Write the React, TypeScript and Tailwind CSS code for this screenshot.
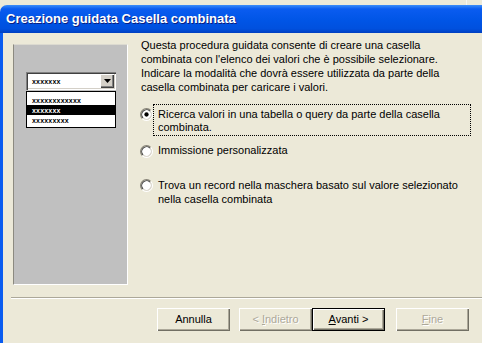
import React from "react";

const font = "font-['Liberation_Sans','Arial',sans-serif]";

function Radio({ checked }: { checked?: boolean }) {
  return (
    <svg width="13" height="13" viewBox="0 0 12 12" className="shrink-0">
      <circle cx="6" cy="6" r="4.5" fill="#fff" />
      <path d="M2.11 9.89A5.5 5.5 0 0 1 9.89 2.11" fill="none" stroke="#8a877a" strokeWidth="1" />
      <path d="M2.82 9.18A4.5 4.5 0 0 1 9.18 2.82" fill="none" stroke="#404040" strokeWidth="1" />
      <path d="M9.89 2.11A5.5 5.5 0 0 1 2.11 9.89" fill="none" stroke="#ffffff" strokeWidth="1" />
      <path d="M9.18 2.82A4.5 4.5 0 0 1 2.82 9.18" fill="none" stroke="#d4d0c8" strokeWidth="1" />
      {checked && <circle cx="6" cy="6" r="2" fill="#000" />}
    </svg>
  );
}

function WizButton({
  label,
  accessKey,
  disabled,
  isDefault,
}: {
  label: string;
  accessKey?: string;
  disabled?: boolean;
  isDefault?: boolean;
}) {
  const idx = accessKey ? label.indexOf(accessKey) : -1;
  return (
    <div
      className={
        "flex h-[23px] w-[73px] items-center justify-center bg-[#ECE9D8] text-[11px] " +
        (isDefault
          ? "border border-black shadow-[inset_1px_1px_0_#fff,inset_-1px_-1px_0_#716f64,inset_-2px_-2px_0_#aca899]"
          : "shadow-[inset_1px_1px_0_#fff,inset_-1px_-1px_0_#716f64,inset_-2px_-2px_0_#aca899]") +
        (disabled ? " text-[#aca899] [text-shadow:1px_1px_0_#fff]" : " text-black")
      }
    >
      {idx < 0 ? (
        <span>{label}</span>
      ) : (
        <span>
          {label.slice(0, idx)}
          <span className="underline underline-offset-[1px]">{accessKey}</span>
          {label.slice(idx + 1)}
        </span>
      )}
    </div>
  );
}

function ListRow({ text, selected }: { text: string; selected?: boolean }) {
  return (
    <div
      className={
        "flex h-[10px] items-center pl-[5px] text-[7px] font-bold leading-none tracking-[0.2px] " +
        (selected ? "bg-black text-white" : "text-black")
      }
    >
      {text}
    </div>
  );
}

export default function App() {
  return (
    <div className={"flex h-[343px] w-[482px] flex-col overflow-hidden bg-[#ECE9D8] " + font}>
      {/* strip above the window */}
      <div className="flex h-[5px] shrink-0">
        <div className="w-[466px]" />
        <div className="w-px bg-[#f7f6f0]" />
      </div>

      {/* Title bar */}
      <div className="flex h-[28px] shrink-0 items-center rounded-tl-[7px] bg-[linear-gradient(to_bottom,#3b8df8_0%,#0a5cf0_14%,#0055e6_55%,#0050de_85%,#003fc0_100%)] pl-[6px]">
        <span className="text-[13px] font-bold text-white [text-shadow:1px_1px_0_#0a1e80]">
          Creazione guidata Casella combinata
        </span>
      </div>

      <div className="flex min-h-0 flex-1">
        {/* window frame */}
        <div className="w-[3px] shrink-0 bg-[#0a5cf0]" />

        <div className="flex flex-1 flex-col text-[11px] text-black">
          <div className="flex items-start pl-[10px] pt-[5px]">
            {/* illustration panel */}
            <div className="mt-[6px] h-[241px] w-[115px] shrink-0 border-b border-l border-r border-t border-b-white border-l-[#8c8a80] border-r-white border-t-[#dcdad0] bg-[#C0C0C0]">
              <div className="ml-[12px] mt-[27px] w-[90px]">
                {/* combo */}
                <div className="flex h-[18px] items-center justify-between bg-white shadow-[inset_1px_1px_0_#808080,inset_2px_2px_0_#404040,inset_-1px_-1px_0_#fff,inset_-2px_-2px_0_#d4d0c8]">
                  <span className="pl-[6px] text-[7px] font-bold leading-none tracking-[0.2px]">xxxxxxx</span>
                  <div className="mr-[2px] flex h-[14px] w-[14px] items-center justify-center bg-[#D4D0C8] shadow-[inset_1px_1px_0_#fff,inset_-1px_-1px_0_#404040,inset_-2px_-2px_0_#808080]">
                    <svg width="7" height="4" viewBox="0 0 7 4">
                      <path d="M0 0H7L3.5 4Z" fill="#000" />
                    </svg>
                  </div>
                </div>
                {/* dropped list */}
                <div className="mt-px border border-black bg-white pb-[2px] pt-[3px]">
                  <ListRow text="xxxxxxxxxxxx" />
                  <ListRow text="xxxxxxx" selected />
                  <ListRow text="xxxxxxxxx" />
                </div>
              </div>
            </div>

            {/* text column */}
            <div className="ml-[13px] flex flex-col">
              <p className="leading-[14px]">
                Questa procedura guidata consente di creare una casella
                <br />
                combinata con l'elenco dei valori che è possibile selezionare.
                <br />
                Indicare la modalità che dovrà essere utilizzata da parte della
                <br />
                casella combinata per caricare i valori.
              </p>

              <div className="-ml-px mt-[10px] flex items-start">
                <div className="mt-[4px]">
                  <Radio checked />
                </div>
                <div className="w-[318px] border border-dotted border-black px-[4px] pb-[1px] pt-[3px] leading-[13px]">
                  Ricerca valori in una tabella o query da parte della casella
                  <br />
                  combinata.
                </div>
              </div>

              <div className="-ml-px mt-[8px] flex items-start">
                <div className="mt-px">
                  <Radio />
                </div>
                <div className="pl-[5px] leading-[13px]">Immissione personalizzata</div>
              </div>

              <div className="-ml-px mt-[20px] flex items-start">
                <div className="mt-px">
                  <Radio />
                </div>
                <div className="pl-[5px] leading-[14px]">
                  Trova un record nella maschera basato sul valore selezionato
                  <br />
                  nella casella combinata
                </div>
              </div>
            </div>
          </div>

          {/* separator */}
          <div className="ml-[8px] mt-[12px] h-[2px] border-b border-t border-b-white border-t-[#aca899]" />

          {/* buttons */}
          <div className="mt-[9px] flex pl-[154px]">
            <WizButton label="Annulla" />
            <div className="w-[9px]" />
            <WizButton label="< Indietro" accessKey="I" disabled />
            <WizButton label="Avanti >" accessKey="A" isDefault />
            <div className="w-[11px]" />
            <WizButton label="Fine" accessKey="F" disabled />
          </div>
        </div>
      </div>
    </div>
  );
}
